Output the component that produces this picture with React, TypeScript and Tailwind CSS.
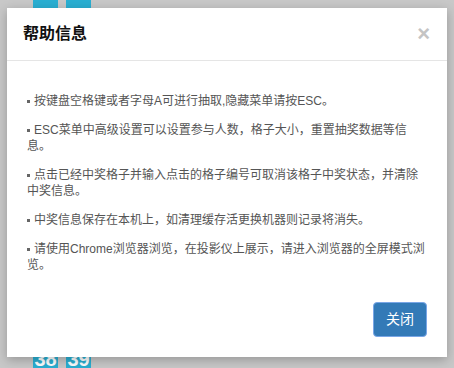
import React from "react";

const items: string[] = [
  "按键盘空格键或者字母A可进行抽取,隐藏菜单请按ESC。",
  "ESC菜单中高级设置可以设置参与人数，格子大小，重置抽奖数据等信息。",
  "点击已经中奖格子并输入点击的格子编号可取消该格子中奖状态，并清除中奖信息。",
  "中奖信息保存在本机上，如清理缓存活更换机器则记录将消失。",
  "请使用Chrome浏览器浏览，在投影仪上展示，请进入浏览器的全屏模式浏览。",
];

function Tile({ n }: { n: string }) {
  return (
    <div className="w-[25px] h-[40px] bg-[#2aafd2] text-white text-[20px] leading-[40px] text-center font-bold">
      {n}
    </div>
  );
}

export default function App() {
  return (
    <div
      className="relative w-[454px] h-[368px] overflow-hidden bg-[#c8c8c8]"
      style={{ fontFamily: '"Liberation Sans", "Noto Sans CJK SC", sans-serif' }}
    >
      <div className="flex flex-col justify-between h-[408px] mt-[-29px] pl-[33px]">
        <div className="flex gap-[8px]">
          <Tile n="30" />
          <Tile n="31" />
        </div>
        <div className="flex gap-[8px]">
          <Tile n="38" />
          <Tile n="39" />
        </div>
      </div>

      <div className="absolute left-[7px] top-[8px] w-[440px] bg-white shadow-[0_3px_10px_rgba(0,0,0,0.25)] flex flex-col">
        <div className="h-[53px] border-b border-[#e5e5e5] flex items-center justify-between pl-[16px] pr-[17px]">
          <h4 className="text-[16px] font-bold text-[#111] leading-[20px]">帮助信息</h4>
          <span className="text-[22px] font-bold leading-none text-[#c4c4c4]">×</span>
        </div>
        <div className="pt-[32px] px-[20px] text-[12px] leading-[16px] text-[#555] flex flex-col gap-[13px]">
          {items.map((t, i) => (
            <p key={i}>
              <span className="inline-block w-[3px] h-[3px] bg-[#666] align-middle mr-[4px] mb-[1px]"></span>
              {t}
            </p>
          ))}
        </div>
        <div className="flex justify-end px-[20px] pt-[29px] pb-[20px]">
          <button className="w-[54px] h-[35px] rounded-[4px] bg-[#337ab7] border border-[#79a6e6] text-white text-[14px]">
            关闭
          </button>
        </div>
      </div>
    </div>
  );
}
